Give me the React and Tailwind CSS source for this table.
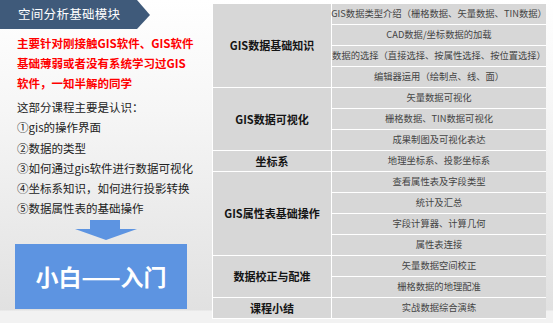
const FONT = { fontFamily: '"Noto Sans CJK SC", "Noto Sans", sans-serif' };

const groups = [
  {
    title: "GIS数据基础知识",
    span: "row-span-4",
    items: [
      "GIS数据类型介绍（栅格数据、矢量数据、TIN数据）",
      "CAD数据/坐标数据的加载",
      "数据的选择（直接选择、按属性选择、按位置选择）",
      "编辑器运用（绘制点、线、面）",
    ],
  },
  {
    title: "GIS数据可视化",
    span: "row-span-3",
    items: ["矢量数据可视化", "栅格数据、TIN数据可视化", "成果制图及可视化表达"],
  },
  { title: "坐标系", span: "row-span-1", items: ["地理坐标系、投影坐标系"] },
  {
    title: "GIS属性表基础操作",
    span: "row-span-4",
    items: ["查看属性表及字段类型", "统计及汇总", "字段计算器、计算几何", "属性表连接"],
  },
  {
    title: "数据校正与配准",
    span: "row-span-2",
    items: ["矢量数据空间校正", "栅格数据的地理配准"],
  },
  { title: "课程小结", span: "row-span-1", items: ["实战数据综合演练"] },
];

const points = [
  "这部分课程主要是认识：",
  "①gis的操作界面",
  "②数据的类型",
  "③如何通过gis软件进行数据可视化",
  "④坐标系知识，如何进行投影转换",
  "⑤数据属性表的基础操作",
];

function Header() {
  return (
    <div className="h-[29px] w-[150px] bg-[#3f5a7a] [clip-path:polygon(0_0,137px_0,150px_15px,137px_29px,0_29px)] flex items-center pl-[18px]">
      <span className="text-[12.5px] text-white tracking-[0.3px]">空间分析基础模块</span>
    </div>
  );
}

function DownArrow() {
  return (
    <svg width="62" height="21" viewBox="0 0 62 21" className="ml-[75px] mt-[1px]">
      <polygon points="15,0 45,0 45,9 62,9 31,20 0,9 15,9" fill="#5d94e1" />
    </svg>
  );
}

function CourseTable() {
  return (
    <div className="mt-[3px] self-start w-[334px] bg-white p-px grid grid-cols-[118px_214px] grid-rows-[repeat(15,20px)] gap-px">
      {groups.map((g) => [
        <div
          key={g.title}
          className={`${g.span} bg-[#d7d7d7] flex items-center justify-center text-[11px] font-bold text-[#141414]`}
        >
          {g.title}
        </div>,
        ...g.items.map((item) => (
          <div
            key={item}
            className="bg-[#d7d7d7] flex items-center justify-center whitespace-nowrap text-[9.3px] text-[#444]"
          >
            {item}
          </div>
        )),
      ])}
    </div>
  );
}

export default function App() {
  return (
    <div
      style={FONT}
      className="w-[553px] h-[323px] overflow-hidden flex bg-[linear-gradient(180deg,#ffffff_0px,#f6f6f6_110px,#e1e1e1_310px,#f2f2f2_311px,#f2f2f2_323px)]"
    >
      <div className="w-[212px] shrink-0 flex flex-col">
        <Header />
        <div className="pl-[17px] mt-[4px] text-[11.5px] leading-[20px] font-bold text-[#ff0000]">
          <p>主要针对刚接触GIS软件、GIS软件</p>
          <p>基础薄弱或者没有系统学习过GIS</p>
          <p>软件，一知半解的同学</p>
        </div>
        <div className="pl-[17px] mt-[4px] text-[11.5px] leading-[20.3px] text-[#222]">
          {points.map((p) => (
            <p key={p}>{p}</p>
          ))}
        </div>
        <DownArrow />
        <div className="ml-[15px] mt-[3px] w-[172px] h-[65px] bg-[#5d94e1] flex items-center justify-center">
          <span className="text-[23px] font-bold text-white">小白——入门</span>
        </div>
      </div>
      <CourseTable />
    </div>
  );
}
